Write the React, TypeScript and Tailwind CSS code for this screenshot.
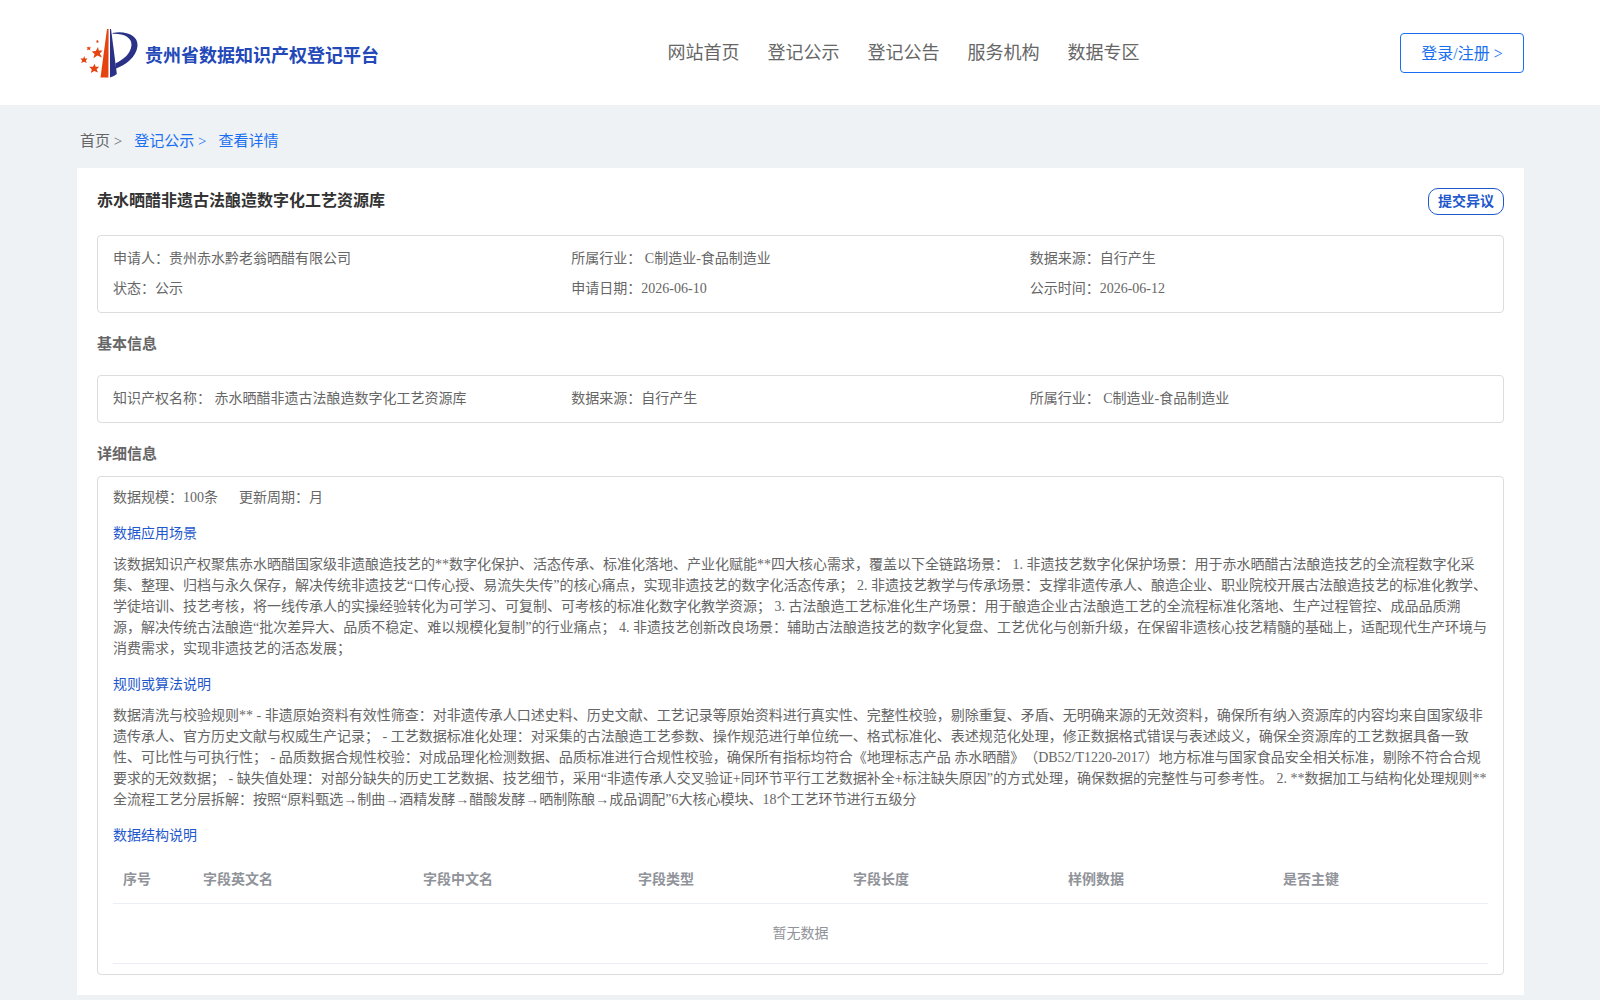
import type { ReactNode } from "react";

const navItems = ["网站首页", "登记公示", "登记公告", "服务机构", "数据专区"];

const summary = [
  "申请人：贵州赤水黔老翁晒醋有限公司",
  "所属行业： C制造业-食品制造业",
  "数据来源：自行产生",
  "状态：公示",
  "申请日期：2026-06-10",
  "公示时间：2026-06-12",
];

const basicInfo = [
  "知识产权名称： 赤水晒醋非遗古法酿造数字化工艺资源库",
  "数据来源：自行产生",
  "所属行业： C制造业-食品制造业",
];

const columns = ["序号", "字段英文名", "字段中文名", "字段类型", "字段长度", "样例数据", "是否主键"];

const sceneText =
  "该数据知识产权聚焦赤水晒醋国家级非遗酿造技艺的**数字化保护、活态传承、标准化落地、产业化赋能**四大核心需求，覆盖以下全链路场景： 1. 非遗技艺数字化保护场景：用于赤水晒醋古法酿造技艺的全流程数字化采集、整理、归档与永久保存，解决传统非遗技艺“口传心授、易流失失传”的核心痛点，实现非遗技艺的数字化活态传承； 2. 非遗技艺教学与传承场景：支撑非遗传承人、酿造企业、职业院校开展古法酿造技艺的标准化教学、学徒培训、技艺考核，将一线传承人的实操经验转化为可学习、可复制、可考核的标准化数字化教学资源； 3. 古法酿造工艺标准化生产场景：用于酿造企业古法酿造工艺的全流程标准化落地、生产过程管控、成品品质溯源，解决传统古法酿造“批次差异大、品质不稳定、难以规模化复制”的行业痛点； 4. 非遗技艺创新改良场景：辅助古法酿造技艺的数字化复盘、工艺优化与创新升级，在保留非遗核心技艺精髓的基础上，适配现代生产环境与消费需求，实现非遗技艺的活态发展；";

const ruleText =
  "数据清洗与校验规则** - 非遗原始资料有效性筛查：对非遗传承人口述史料、历史文献、工艺记录等原始资料进行真实性、完整性校验，剔除重复、矛盾、无明确来源的无效资料，确保所有纳入资源库的内容均来自国家级非遗传承人、官方历史文献与权威生产记录； - 工艺数据标准化处理：对采集的古法酿造工艺参数、操作规范进行单位统一、格式标准化、表述规范化处理，修正数据格式错误与表述歧义，确保全资源库的工艺数据具备一致性、可比性与可执行性； - 品质数据合规性校验：对成品理化检测数据、品质标准进行合规性校验，确保所有指标均符合《地理标志产品 赤水晒醋》（DB52/T1220-2017）地方标准与国家食品安全相关标准，剔除不符合合规要求的无效数据； - 缺失值处理：对部分缺失的历史工艺数据、技艺细节，采用“非遗传承人交叉验证+同环节平行工艺数据补全+标注缺失原因”的方式处理，确保数据的完整性与可参考性。 2. **数据加工与结构化处理规则** 全流程工艺分层拆解：按照“原料甄选→制曲→酒精发酵→醋酸发酵→晒制陈酿→成品调配”6大核心模块、18个工艺环节进行五级分";

const Logo = () => (
  <svg viewBox="0 0 60 52" className="h-[52px] w-[60px]" aria-hidden="true">
    {/* Pillars */}
    <path d="M27 2 L28.6 2 L28.4 50.5 L20.5 50.5 Z" fill="#e5430f" />
    <path d="M30 2 L31 2 L34 25 L36.8 47 Q34 49.5 30 50.5 Z" fill="#2a3287" />
    {/* Bowl of the P */}
    <path
      d="M32.5 6 C45 3.2 58.5 8 57.5 19 C56.5 30 45 38.5 36 41.5 L35.3 36.5 C43 33 51 26.5 51.5 18 C51.8 10 43 6.3 32.5 6.8 Z"
      fill="#2a3287"
    />
    {/* Stars */}
    <g fill="#e5430f">
      <path d="M18 20 L18.8 23.6 L22.6 23.4 L19.8 26.4 L22 30.6 L17.4 28.4 L13.4 31.2 L14.6 27 L11.6 24.6 L15.8 24 Z" />
      <path d="M14.6 36.8 L15.6 39.8 L19.2 39.8 L16.6 42.2 L18 45.6 L14.2 44 L10.8 46 L11.8 42.4 L9.2 39.8 L13 39.8 Z" />
      <path d="M4.4 29 L5 31.4 L7.6 31.4 L5.8 33.4 L6.8 36 L4 34.8 L1.2 36 L2.2 33.4 L0.4 31.4 L3.2 31.4 Z" />
      <path d="M9.2 19 L9.4 20.4 L11.2 20.6 L9.8 21.8 L10.4 23.6 L8.8 22.6 L7 23.2 L7.6 21.4 L6.6 20.2 L8.4 20.2 Z" />
      <path d="M17.6 13 L18 14 L19 14.2 L18.2 15 L18.2 16 L17.2 15.4 L16.2 15.6 L16.6 14.6 L16.2 13.8 Z" />
    </g>
  </svg>
);

const InfoGrid = ({ items }: { items: string[] }) => (
  <div className="grid grid-cols-3 rounded border border-[#dcdcdc] px-[15px] py-2 text-sm leading-[30px]">
    {items.map((item) => (
      <div key={item}>{item}</div>
    ))}
  </div>
);

const DetailBlock = ({ title, children }: { title: string; children: ReactNode }) => (
  <section className="mt-[15px]">
    <h3 className="leading-[22px] text-[#1e58cc]">{title}</h3>
    {children}
  </section>
);

const App = () => {
  return (
    <div className="min-h-screen bg-[#eef2f5] font-['Liberation_Serif','Noto_Sans_CJK_SC',serif] text-[#666] [text-spacing-trim:space-all]">
      <header className="bg-white">
        <div className="flex h-[105px] items-center justify-between pr-19 pl-20">
          <a href="#" className="flex items-center gap-[5px] pr-7">
            <Logo />
            <span className="pt-[6px] text-lg font-bold text-[#2348b8]">贵州省数据知识产权登记平台</span>
          </a>
          <nav className="flex gap-7 text-lg">
            {navItems.map((item) => (
              <a key={item} href="#">
                {item}
              </a>
            ))}
          </nav>
          <button className="h-10 w-[124px] rounded border border-[#1a6ff0] pt-[2px] text-base text-[#1a6ff0]">
            登录/注册 &gt;
          </button>
        </div>
      </header>

      <main className="pr-19 pl-[77px]">
        <nav className="flex h-[63px] items-center gap-3 pt-[10px] pl-[3px] text-[15px]">
          <a href="#">首页 &gt;</a>
          <a href="#" className="text-[#1a6ff0]">
            登记公示 &gt;
          </a>
          <a href="#" className="text-[#1a6ff0]">
            查看详情
          </a>
        </nav>

        <div className="bg-white p-5">
          <div className="flex items-start justify-between">
            <h1 className="text-base leading-[26px] font-bold text-[#333]">赤水晒醋非遗古法酿造数字化工艺资源库</h1>
            <button className="h-[27px] w-[76px] rounded-[10px] border border-[#1e58cc] text-sm leading-[25px] font-bold text-[#1e58cc]">
              提交异议
            </button>
          </div>

          <div className="mt-5">
            <InfoGrid items={summary} />
          </div>

          <h2 className="py-5 text-[15px] leading-[22px] font-bold">基本信息</h2>
          <InfoGrid items={basicInfo} />

          <h2 className="pt-5 pb-[11px] text-[15px] leading-[22px] font-bold">详细信息</h2>
          <div className="rounded border border-[#dcdcdc] px-[15px] py-[10px] text-sm">
            <div className="flex gap-[21px] leading-[21px]">
              <span>数据规模：100条</span>
              <span>更新周期：月</span>
            </div>

            <DetailBlock title="数据应用场景">
              <p className="mt-[9px] leading-[21px]">{sceneText}</p>
            </DetailBlock>

            <DetailBlock title="规则或算法说明">
              <p className="mt-[9px] leading-[21px]">{ruleText}</p>
            </DetailBlock>

            <DetailBlock title="数据结构说明">
              <table className="mt-2 w-full table-fixed text-left text-[#909399]">
                <colgroup>
                  <col className="w-20" />
                  <col className="w-[220px]" />
                </colgroup>
                <thead>
                  <tr className="h-12 border-b border-[#ebeef5]">
                    {columns.map((name) => (
                      <th key={name} className="px-[10px] pt-[2px] font-bold">
                        {name}
                      </th>
                    ))}
                  </tr>
                </thead>
                <tbody>
                  <tr className="h-[60px] border-b border-[#ebeef5]">
                    <td colSpan={columns.length} className="pt-[2px] text-center">
                      暂无数据
                    </td>
                  </tr>
                </tbody>
              </table>
            </DetailBlock>
          </div>
        </div>
      </main>
    </div>
  );
};

export default App;
